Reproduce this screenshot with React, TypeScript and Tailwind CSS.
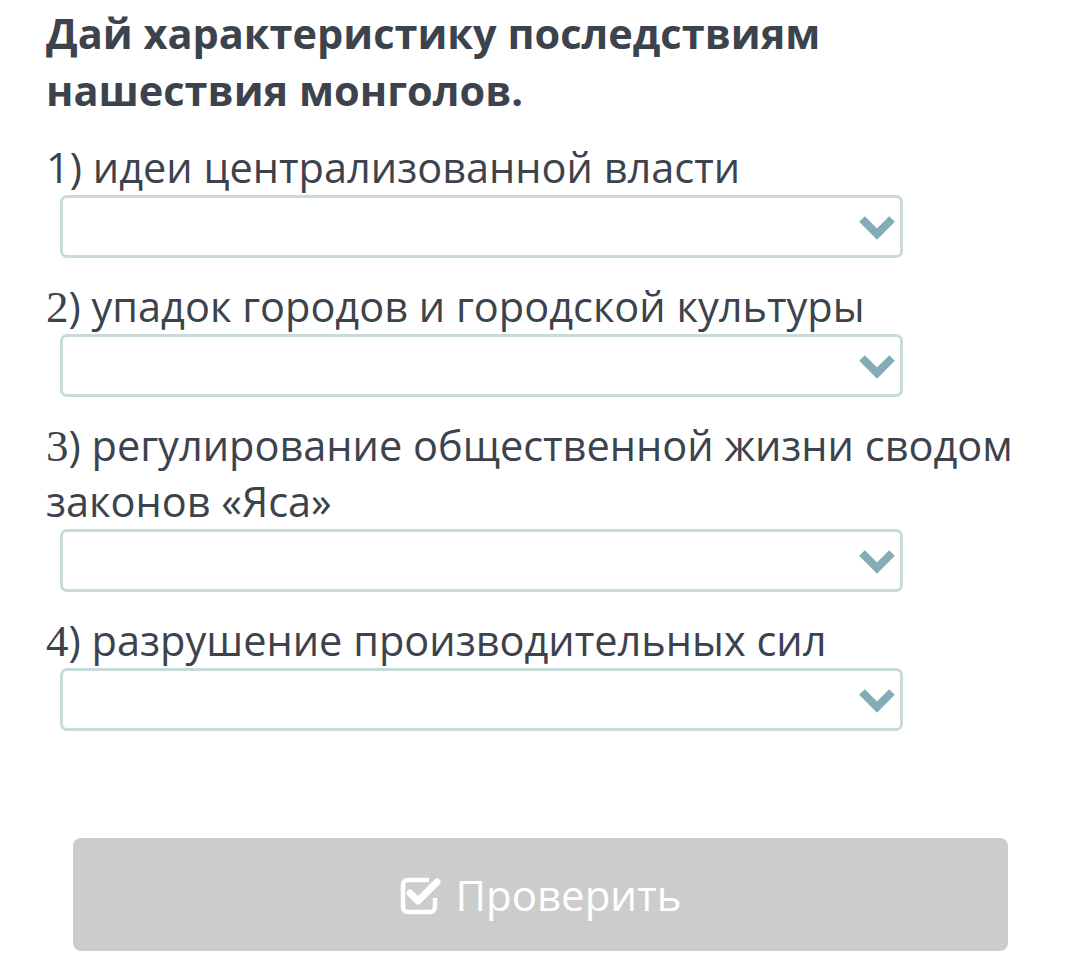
const items = [
  { num: "1", text: "идеи централизованной власти" },
  { num: "2", text: "упадок городов и городской культуры" },
  { num: "3", text: "регулирование общественной жизни сводом законов «Яса»" },
  { num: "4", text: "разрушение производительных сил" },
];

const Chevron = () => (
  <svg width="38" height="26" viewBox="0 0 38 26" className="shrink-0">
    <polyline
      points="4,5 19,20 34,5"
      fill="none"
      stroke="#82adb7"
      strokeWidth="8"
      strokeLinejoin="miter"
    />
  </svg>
);

const CheckSquare = () => (
  <svg width="44" height="42" viewBox="0 0 44 42">
    <path
      d="M30 6 H9 a5 5 0 0 0 -5 5 V33 a5 5 0 0 0 5 5 H31 a5 5 0 0 0 5 -5 V24"
      fill="none"
      stroke="white"
      strokeWidth="4.5"
    />
    <polyline
      points="11,19 19,27 38,8"
      fill="none"
      stroke="white"
      strokeWidth="7"
      strokeLinecap="round"
      strokeLinejoin="round"
    />
  </svg>
);

const Select = () => (
  <div className="ml-[14px] w-[843px] h-[63px] border-[3px] border-[#c9dadb] rounded-[7px] bg-white flex items-center justify-end pr-[4px]">
    <Chevron />
  </div>
);

export default function App() {
  return (
    <div
      className="w-[1080px] h-[969px] bg-white text-[#3c434d] overflow-hidden"
      style={{ fontFamily: '"Open Sans", "Liberation Sans", sans-serif' }}
    >
      <div className="pl-[46px] pt-[5px] w-[1040px]">
        <h1 className="text-[41.5px] leading-[57px] font-bold">
          Дай характеристику последствиям
          <br />
          нашествия монголов.
        </h1>
        <div className="mt-[20px] flex flex-col gap-[20px]">
          {items.map((it) => (
            <div key={it.num}>
              <p className="text-[41.5px] leading-[56px] h-auto w-[990px]">
                {it.num === "1" ? (
                  it.num
                ) : (
                  <span
                    className="text-[45px] leading-[0]"
                    style={{ fontFamily: '"Liberation Serif", serif' }}
                  >
                    {it.num}
                  </span>
                )}
                ) {it.text}
              </p>
              <Select />
            </div>
          ))}
        </div>
      </div>
      <div className="mt-[107px] ml-[73px] w-[935px] h-[113px] rounded-[8px] bg-[#cccccc] flex items-center justify-center gap-[12px]">
        <CheckSquare />
        <span className="text-white text-[42px] leading-none">Проверить</span>
      </div>
    </div>
  );
}
